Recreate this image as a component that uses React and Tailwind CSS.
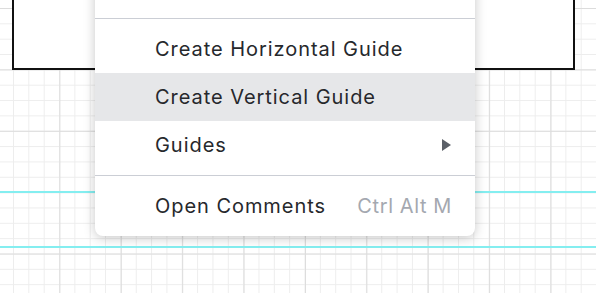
import React from "react";

const Row = ({ label, shortcut, submenu, active }) => (
  <div
    className={`h-12 flex items-center justify-between pl-[60px] pr-[23px] ${
      active ? "bg-[#e6e7e9]" : ""
    }`}
  >
    <span className="text-[20px] tracking-[0.95px] text-[#26282c]">{label}</span>
    {shortcut && (
      <span className="text-[20px] tracking-[0.6px] text-[#a4a8b0]">{shortcut}</span>
    )}
    {submenu && (
      <svg width="9" height="12" viewBox="0 0 9 12" className="mr-px">
        <path d="M0 0 L9 6 L0 12 Z" fill="#5b6068" />
      </svg>
    )}
  </div>
);

const Divider = () => <div className="my-1.5 h-px bg-[#cbced5]" />;

const App = () => {
  return (
    <div className="relative w-[596px] h-[293px] overflow-hidden bg-white font-['Inter',sans-serif]">
      {/* canvas grid */}
      <div className="absolute inset-0 bg-[linear-gradient(to_right,#dcdcdc_1px,transparent_1px),linear-gradient(to_bottom,#dcdcdc_1px,transparent_1px),linear-gradient(to_right,#ededed_1px,transparent_1px),linear-gradient(to_bottom,#ededed_1px,transparent_1px)] bg-[size:61.4px_61.4px,61.4px_61.4px,15.35px_15.35px,15.35px_15.35px] bg-[position:-2px_8px,-2px_8px,13px_8px,13px_8px]" />

      {/* guides */}
      <div className="absolute left-0 right-0 top-[191px] h-[2px] bg-[#84eef0]" />
      <div className="absolute left-0 right-0 top-[246px] h-[2px] bg-[#84eef0]" />

      {/* frame on canvas */}
      <div className="absolute left-[12px] top-[-20px] w-[563px] h-[90px] border-2 border-[#111] bg-white" />

      {/* context menu */}
      <div className="absolute left-[95px] top-[-42px] w-[380px] py-1.5 bg-white rounded-lg shadow-[0_2px_12px_rgba(0,0,0,0.22)]">
        <div className="h-12" />
        <Divider />
        <Row label="Create Horizontal Guide" />
        <Row label="Create Vertical Guide" active />
        <Row label="Guides" submenu />
        <Divider />
        <Row label="Open Comments" shortcut="Ctrl Alt M" />
      </div>
    </div>
  );
};

export default App;
